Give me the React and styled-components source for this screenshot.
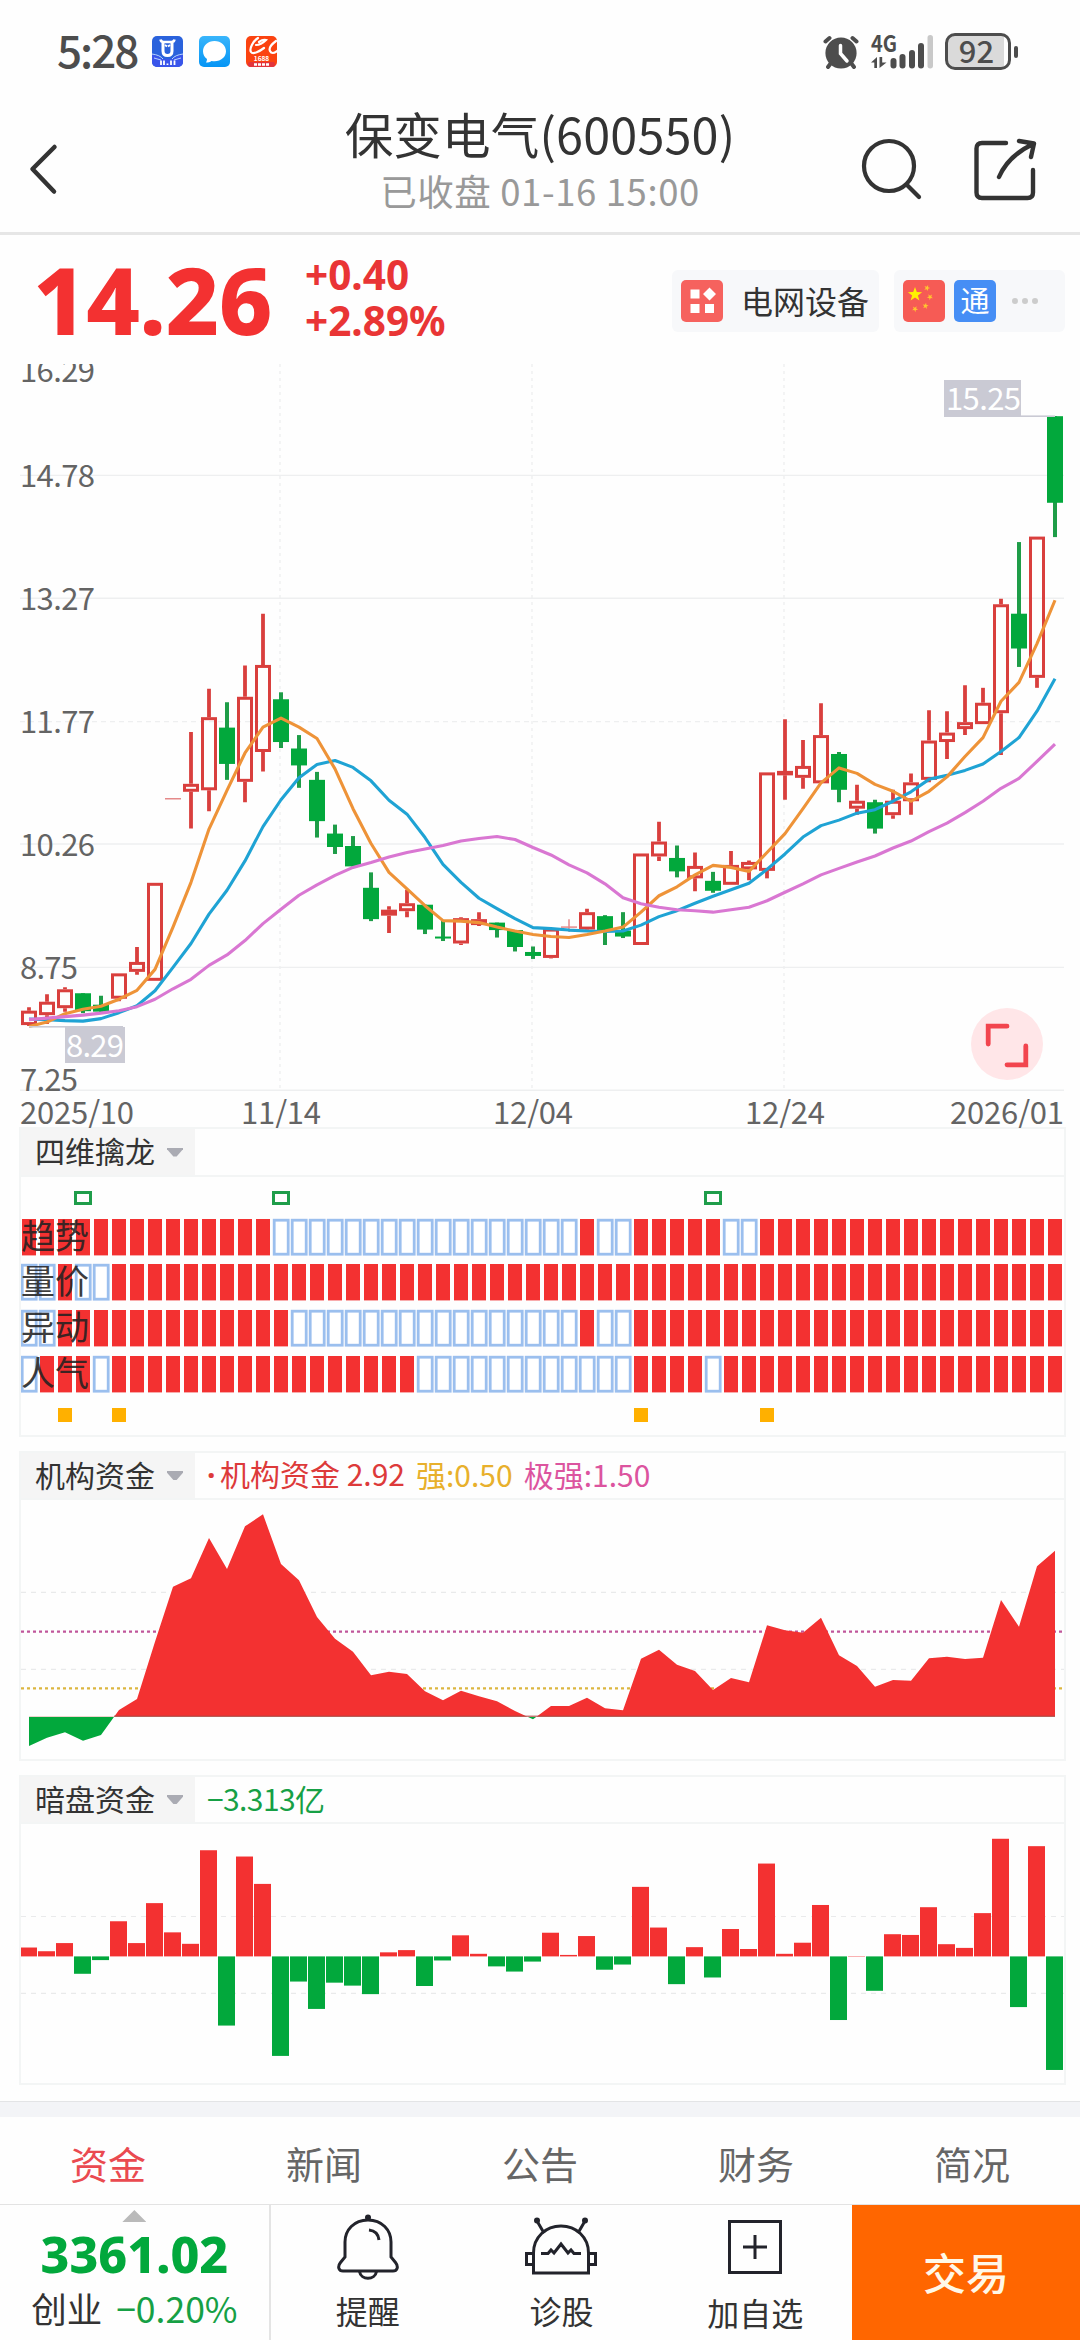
import React from 'react';
import styled, { createGlobalStyle } from 'styled-components';

const RED = '#f33131';
const GREEN = '#02a83c';
const STEP = 18;

const colX = i => 29 + STEP * i;
const priceY = v => v * 0.49745 - 4;
const fundY = v => v / 3 - 60;

// [direction, body top, body bottom, high, low]
const candles = [
  ['up', 1308, 1337, 1301, 1339],
  ['up', 1290, 1317, 1275, 1335],
  ['up', 1265, 1303, 1261, 1310],
  ['down', 1273, 1309, 1273, 1313],
  ['down', 1296, 1310, 1278, 1310],
  ['up', 1233, 1284, 1233, 1289],
  ['up', 1210, 1230, 1180, 1236],
  ['up', 1051, 1248, 1051, 1248],
  ['flat', 882, 882, 882, 882],
  ['up', 852, 868, 748, 942],
  ['up', 718, 865, 661, 907],
  ['down', 739, 812, 688, 844],
  ['up', 677, 848, 614, 889],
  ['up', 613, 788, 510, 827],
  ['down', 682, 768, 668, 780],
  ['down', 781, 815, 754, 860],
  ['down', 844, 927, 828, 960],
  ['down', 952, 979, 934, 993],
  ['down', 977, 1018, 957, 1018],
  ['down', 1061, 1124, 1030, 1128],
  ['up', 1105, 1117, 1098, 1152],
  ['up', 1092, 1108, 1065, 1120],
  ['down', 1095, 1145, 1095, 1154],
  ['down', 1159, 1163, 1127, 1168],
  ['up', 1122, 1173, 1120, 1176],
  ['up', 1124, 1136, 1110, 1138],
  ['down', 1131, 1146, 1131, 1161],
  ['down', 1146, 1180, 1146, 1189],
  ['down', 1190, 1198, 1179, 1204],
  ['up', 1143, 1202, 1143, 1203],
  ['flat', 1140, 1140, 1124, 1150],
  ['up', 1110, 1145, 1103, 1150],
  ['down', 1118, 1149, 1116, 1176],
  ['down', 1147, 1159, 1110, 1162],
  ['up', 992, 1176, 992, 1176],
  ['up', 968, 998, 928, 1007],
  ['down', 1001, 1028, 976, 1040],
  ['up', 1017, 1042, 990, 1068],
  ['down', 1047, 1067, 1029, 1071],
  ['up', 1015, 1055, 987, 1055],
  ['up', 1009, 1024, 1006, 1046],
  ['up', 829, 1027, 829, 1042],
  ['up', 826, 835, 722, 884],
  ['up', 816, 840, 764, 862],
  ['up', 754, 851, 690, 851],
  ['down', 792, 864, 788, 889],
  ['up', 886, 902, 854, 914],
  ['down', 889, 942, 884, 952],
  ['up', 886, 915, 864, 922],
  ['up', 849, 887, 831, 914],
  ['up', 765, 844, 704, 849],
  ['up', 749, 768, 706, 802],
  ['up', 728, 742, 654, 754],
  ['up', 689, 732, 659, 732],
  ['up', 491, 710, 480, 794],
  ['down', 510, 580, 366, 617],
  ['up', 355, 639, 355, 659],
  ['down', 113, 287, 113, 356],
];

const averages = [
  {
    color: '#1fa3d4',
    points: [
      1325, 1326, 1328, 1329, 1324, 1312, 1298, 1268, 1221, 1173, 1114, 1066,
      1007, 938, 884, 840, 813, 805, 819, 846, 885, 913, 960, 1014, 1050, 1082,
      1103, 1123, 1141, 1143, 1146, 1148, 1149, 1148, 1136, 1119, 1107, 1092,
      1078, 1065, 1052, 1024, 993, 959, 936, 925, 911, 904, 887, 868, 843, 835,
      825, 812, 787, 759, 706, 641,
    ],
  },
  {
    color: '#ee9338',
    points: [
      1340, 1331, 1314, 1305, 1299, 1285, 1267, 1225, 1140, 1050, 943, 865, 790,
      738, 720, 738, 761, 822, 902, 972, 1030, 1063, 1097, 1127, 1128, 1131,
      1140, 1148, 1155, 1159, 1161, 1155, 1148, 1140, 1110, 1077, 1059, 1035,
      1016, 1020, 1028, 990, 952, 902, 850, 820, 831, 853, 867, 887, 867, 838,
      797, 759, 686, 648, 570, 483,
    ],
  },
  {
    color: '#d977d2',
    points: [
      1326, 1323, 1320, 1317, 1313, 1308, 1300, 1285, 1264, 1245, 1217, 1196,
      1167, 1133, 1104, 1076, 1055, 1036, 1020, 1010, 999, 990, 983, 976, 967,
      962, 958, 964, 980, 995, 1015, 1031, 1053, 1081, 1093, 1100, 1105, 1107,
      1110, 1105, 1100, 1087, 1070, 1053, 1035, 1022, 1009, 997, 981, 967, 948,
      931, 910, 887, 861, 841, 807, 772,
    ],
  },
];

const priceLabels = [
  ['16.29', 18],
  ['14.78', 123],
  ['13.27', 246],
  ['11.77', 369],
  ['10.26', 492],
  ['8.75', 615],
  ['7.25', 727],
];

const dateLabels = [
  ['2025/10', 20, 'start'],
  ['11/14', 281, 'middle'],
  ['12/04', 533, 'middle'],
  ['12/24', 785, 'middle'],
  ['2026/01', 1064, 'end'],
];

const span = (from, to) =>
  Array.from({ length: to - from + 1 }, (_, i) => from + i);

const signalRows = [
  { label: '趋势', y: 41, off: [...span(14, 30), 32, 33, 39, 40] },
  { label: '量价', y: 86, off: [0, 1, 3, 4] },
  { label: '异动', y: 132, off: [0, 1, ...span(15, 30), 32, 33] },
  { label: '人气', y: 178, off: [0, 4, ...span(22, 33), 38] },
];

const funds = [
  918, 893, 877, 902, 885, 810, 777, 605, 440, 415, 294, 387, 259, 223, 372,
  421, 531, 596, 635, 706, 695, 702, 754, 781, 752, 769, 784, 813, 838, 798,
  798, 773, 805, 811, 656, 629, 674, 693, 750, 714, 727, 556, 571, 578, 533,
  646, 678, 740, 720, 722, 655, 650, 657, 653, 480, 560, 379, 332,
];

const darkPool = [
  24, 14, 36, -47, -10, 95, 36, 144, 65, 34, 287, -187, 270, 196, -269, -68,
  -142, -71, -79, -102, 11, 17, -80, -11, 57, 7, -27, -41, -14, 64, 4, 55, -36,
  -22, 188, 78, -75, 25, -57, 74, 20, 251, 7, 37, 139, -172, 1, -93, 60, 58,
  133, 33, 23, 117, 318, -137, 298, -307,
];

const Candle = ({ data, index }) => {
  const [kind, top, bottom, high, low] = data;
  const x = colX(index);
  const y1 = priceY(top);
  const y2 = priceY(bottom);
  if (kind === 'flat') {
    return (
      <g stroke="#e58a8a" strokeWidth="1.5">
        <path d={`M${x - 8} ${y1}h16`} />
        {high !== low && <path d={`M${x} ${priceY(high)}V${priceY(low)}`} />}
      </g>
    );
  }
  if (kind === 'down') {
    return (
      <g fill={GREEN}>
        <rect x={x - 2} y={priceY(high)} width="4" height={priceY(low) - priceY(high)} fill="#1e9d48" />
        <rect x={x - 8} y={y1} width="16" height={y2 - y1} />
      </g>
    );
  }
  return (
    <g stroke="#d93f3d" fill="none">
      <path
        strokeWidth="3.8"
        d={`M${x} ${priceY(high)}V${y1}M${x} ${y2}V${priceY(low)}`}
      />
      <rect
        x={x - 6.5}
        y={y1 + 1.5}
        width="13"
        height={Math.max(y2 - y1 - 3, 0.6)}
        strokeWidth="3"
      />
    </g>
  );
};

const PriceChart = () => (
  <ChartWrap>
    <ChartSvg width="1080" height="764" viewBox="0 0 1080 764">
      <g stroke="#eeeff0" strokeWidth="1.4">
        {[111.4, 234.3, 480, 603.4, 726.2].map(y => (
          <path key={y} d={`M20 ${y}H1064`} />
        ))}
        <path d="M20 357.6H1064" strokeDasharray="5 4" />
        {[280, 532, 784].map(x => (
          <path key={x} d={`M${x} 0V726`} strokeDasharray="3 4" />
        ))}
      </g>
      <g fill="#646464" fontSize="31">
        {priceLabels.map(([text, y]) => (
          <text key={text} x="20" y={y} textLength={text.length > 4 ? 75 : 58}>
            {text}
          </text>
        ))}
        {dateLabels.map(([text, x, anchor]) => (
          <text
            key={text}
            x={x}
            y="760"
            textAnchor={anchor}
            textLength={text.length > 5 ? 114 : 80}
          >
            {text}
          </text>
        ))}
      </g>
      {candles.map((data, i) => (
        <Candle key={i} data={data} index={i} />
      ))}
      {averages.map(line => (
        <polyline
          key={line.color}
          fill="none"
          stroke={line.color}
          strokeWidth="3.1"
          strokeLinejoin="round"
          points={line.points.map((v, i) => `${colX(i)},${priceY(v)}`).join(' ')}
        />
      ))}
      <g fill="#cacad4">
        <rect x="29" y="662" width="94" height="1.6" />
        <rect x="65" y="663" width="60" height="36" />
        <rect x="944" y="16" width="77" height="36" />
        <rect x="944" y="51.4" width="111" height="1.6" />
      </g>
      <g fill="#fff" fontSize="31">
        <text x="66" y="693" textLength="58">8.29</text>
        <text x="946" y="46" textLength="75">15.25</text>
      </g>
    </ChartSvg>
    <ExpandButton>
      <svg width="72" height="72" viewBox="0 0 72 72" fill="none" stroke="#f2454e" strokeWidth="4.8">
        <path d="M17.2 36V18.2H36M36 56.8H54.8V38" strokeLinecap="round" />
      </svg>
    </ExpandButton>
  </ChartWrap>
);

const SignalChart = () => (
  <ChartSvg width="1043" height="258" viewBox="21 0 1043 258">
    <g fill="none" stroke="#1f9d4a" strokeWidth="3">
      {[3, 14, 38].map(i => (
        <rect key={i} x={colX(i) - 7.5} y="15.5" width="15" height="11" />
      ))}
    </g>
    {signalRows.map(row => (
      <g key={row.label}>
        {candles.map((_, i) =>
          row.off.includes(i) ? (
            <rect
              key={i}
              x={colX(i) - 6.8}
              y={row.y + 2.2}
              width="14"
              height="34"
              fill="#fff"
              stroke="#9bbfee"
              strokeWidth="2.8"
            />
          ) : (
            <rect key={i} x={colX(i) - 7} y={row.y + 1} width="14" height="36.4" fill={RED} />
          )
        )}
        <text x="21" y={row.y + 31} fontSize="34" fill="#222" fillOpacity="0.88">
          {row.label}
        </text>
      </g>
    ))}
    <g fill="#ffb000">
      {[2, 5, 34, 41].map(i => (
        <rect key={i} x={colX(i) - 7} y="231" width="14" height="14" />
      ))}
    </g>
  </ChartSvg>
);

const FundChart = () => {
  const line = funds.map((v, i) => `${colX(i)},${fundY(v)}`).join(' ');
  const zero = fundY(830);
  return (
    <ChartSvg width="1043" height="259" viewBox="21 0 1043 259">
      <defs>
        <clipPath id="above"><rect x="0" y="0" width="1080" height={zero} /></clipPath>
        <clipPath id="below"><rect x="0" y={zero} width="1080" height="90" /></clipPath>
      </defs>
      <g stroke="#e9eaeb" strokeWidth="1.2" strokeDasharray="5 5">
        <path d={`M21 ${fundY(457)}H1064`} />
        <path d={`M21 ${fundY(688)}H1064`} />
      </g>
      <path d={`M21 ${fundY(575)}H1064`} stroke="#c0569b" strokeWidth="2.2" strokeDasharray="3 3" />
      <path d={`M21 ${fundY(745)}H1064`} stroke="#dcb640" strokeWidth="2.2" strokeDasharray="3 3" />
      <polygon
        clipPath="url(#above)"
        fill={RED}
        points={`${colX(0)},${zero} ${line} ${colX(57)},${zero}`}
      />
      <polygon
        clipPath="url(#below)"
        fill={GREEN}
        points={`${colX(0)},${zero} ${line} ${colX(57)},${zero}`}
      />
      <path d={`M114 ${zero - 0.5}H1055`} stroke="#b04545" strokeWidth="1" />
    </ChartSvg>
  );
};

const DarkPoolChart = () => (
  <ChartSvg width="1043" height="259" viewBox="21 0 1043 259">
    <g stroke="#e9eaeb" strokeWidth="1.2" strokeDasharray="5 5">
      <path d="M21 92.5H1064M21 169.4H1064" />
    </g>
    {darkPool.map((v, i) => {
      const height = Math.abs(v) / 2.7034;
      return (
        <rect
          key={i}
          x={20 + STEP * i}
          y={v > 0 ? 132.4 - height : 132.4}
          width="17"
          height={height}
          fill={v > 0 ? RED : GREEN}
        />
      );
    })}
  </ChartSvg>
);

const AlarmIcon = () => (
  <svg width="36" height="36" viewBox="0 0 36 36">
    <g stroke="#4d4d4d" strokeWidth="4" strokeLinecap="round">
      <path d="M2.500 7.500L6.500 4M33.500 7.500L29.500 4M8 29L5 33M28 29L31 33" />
    </g>
    <circle cx="18" cy="19" r="15.600" fill="#4d4d4d" />
    <path d="M17.500 11.500V19.500L24 27" fill="none" stroke="#fff" strokeWidth="3.500" strokeLinecap="round" />
  </svg>
);

const SignalIcon = () => (
  <svg width="64" height="36" viewBox="0 0 64 36" fill="#4d4d4d" overflow="visible">
    <text x="0" y="18" fontSize="23" fontWeight="700" textLength="26" lengthAdjust="spacingAndGlyphs">4G</text>
    <path d="M0 28.500L6 23V34H3.300V28.500ZM8.500 23H11.200V28.500H15.500L8.500 34Z" />
    <rect x="19.500" y="24" width="6" height="10.500" rx="3" />
    <rect x="28.500" y="20" width="6" height="14.500" rx="3" />
    <rect x="38" y="16" width="6" height="18.500" rx="3" />
    <rect x="47" y="9" width="6" height="25.500" rx="3" />
    <rect x="56.500" y="1" width="5.500" height="33.500" rx="2.700" fill="#c9c9c9" />
  </svg>
);

const BullAppIcon = () => (
  <svg width="31" height="31" viewBox="0 0 31 31">
    <rect width="31" height="31" rx="5" fill="#2a62dc" />
    <path d="M0 18Q7 20 10 23H21Q24 20 31 18V26A5 5 0 0 1 26 31H5A5 5 0 0 1 0 26Z" fill="#3a55ea" />
    <path d="M0 18Q8 19 11 23M31 18Q23 19 20 23M2 22L9 24M29 22L22 24" stroke="#b7d2ff" strokeWidth="1" fill="none" />
    <path d="M8.500 3.500Q9 6 11.500 6H19.500Q22 6 22.500 3.500" fill="none" stroke="#fff" strokeWidth="2.600" />
    <path d="M11 7V15Q11 19.500 15.500 19.500T20 15V7" fill="none" stroke="#fff" strokeWidth="3" />
    <path d="M13 9L15 10.500M18 9L16 10.500" stroke="#fff" strokeWidth="1.800" />
    <path d="M9 24.500V29M12 24.500V29M15.500 27.500V29M19 24.500V29M22.500 24.500V29" stroke="#fff" strokeWidth="1.800" />
  </svg>
);

const ChatAppIcon = () => (
  <svg width="31" height="31" viewBox="0 0 31 31">
    <defs>
      <linearGradient id="chat" x2="0" y2="1">
        <stop stopColor="#39b5fb" />
        <stop offset="1" stopColor="#0595f5" />
      </linearGradient>
    </defs>
    <rect width="31" height="31" rx="5" fill="url(#chat)" />
    <path d="M15.500 5C9 5 4 9.500 4 15.300c0 3.300 1.500 6 4 7.800 0 1.300-.3 2.400-1 3.300 2.300 0 4-.5 5.500-1.500 8 1.500 14.500-3 14.500-9.600C27 9.500 22 5 15.500 5z" fill="#fff" />
  </svg>
);

const MarketAppIcon = () => (
  <svg width="31" height="31" viewBox="0 0 31 31">
    <rect width="31" height="31" rx="5" fill="#fb4310" />
    <path d="M12 2C7 5 3 13 5 16S14 15 18 12M10 9Q15 9 20 4Q17 3 13 6M30 5Q22 11 24 15T31 15" fill="none" stroke="#fff" strokeWidth="2.200" strokeLinecap="round" />
    <text x="15.500" y="24.500" fill="#fff" fontSize="6.500" fontWeight="700" textAnchor="middle">1688</text>
    <rect y="26" x="2" width="27" height="5" rx="2" fill="#e2343c" />
    <path d="M8 28.500H23" stroke="#fff" strokeWidth="2.500" strokeDasharray="3 1" />
  </svg>
);

const ShareIcon = () => (
  <svg width="64" height="64" viewBox="0 0 64 64" fill="none" stroke="#333" strokeWidth="4.400" strokeLinecap="round" strokeLinejoin="round">
    <path d="M33 5H9Q3.500 5 3.500 10.500V54.500Q3.500 60 9 60H54.500Q60 60 60 54.500V32" />
    <path d="M26 39Q35 18 60 6M46 3L61 5.500L58 19" />
  </svg>
);

const BellIcon = () => (
  <svg width="62" height="66" viewBox="0 0 62 66" fill="none" stroke="#22232b" strokeWidth="3">
    <circle cx="31" cy="3.500" r="3" fill="#22232b" stroke="none" />
    <path d="M31 6C17 6 8 16 8 28V43L3.500 48.500C0 53 2 57 6 57H56C60 57 62 53 58.500 48.500L54 43V28C54 16 45 6 31 6Z" />
    <path d="M22.500 57.500C24 66.500 38 66.500 39.500 57.500" />
    <path d="M32 16Q41 17 42 26" />
  </svg>
);

const RobotIcon = () => (
  <svg width="74" height="60" viewBox="0 0 74 60" fill="none" stroke="#22232b" strokeWidth="3">
    <circle cx="13" cy="3.500" r="3" fill="#22232b" stroke="none" />
    <circle cx="61" cy="3.500" r="3" fill="#22232b" stroke="none" />
    <path d="M13 4L20 16M61 4L54 16" />
    <path d="M9.500 56V36C9.500 20 22 9 37 9S64.500 20 64.500 36V56Z" />
    <path d="M9.500 36.500H2.500V47.500H9.500M64.500 36.500H71.500V47.500H64.500" />
    <path d="M17 36.500H24L27 33L30 36L37 27L44 36L47 33L50 36.500H57" />
  </svg>
);

const AddIcon = () => (
  <svg width="54" height="54" viewBox="0 0 54 54" fill="none" stroke="#22232b" strokeWidth="3">
    <path d="M1.500 1.500H52.500V52.500H1.500ZM27 15V39M15 27H39" />
  </svg>
);

const Star = ({ x, y, r, turn = 0 }) => (
  <polygon
    transform={`translate(${x} ${y}) rotate(${turn}) scale(${r})`}
    points="0,-1 .24,-.32 .95,-.31 .38,.12 .59,.81 0,.4 -.59,.81 -.38,.12 -.95,-.31 -.24,-.32"
  />
);

const Indicator = ({ name, headHeight, children, chart }) => (
  <Panel>
    <PanelHead $height={headHeight}>
      <PanelTab>
        {name}
        <Caret />
      </PanelTab>
      {children}
    </PanelHead>
    {chart}
  </Panel>
);

const App = () => (
  <Page>
    <GlobalStyle />
    <StatusBar>
      <Clock>5:28</Clock>
      <AppIcons>
        <BullAppIcon />
        <ChatAppIcon />
        <MarketAppIcon />
      </AppIcons>
      <StatusRight>
        <AlarmIcon />
        <SignalIcon />
        <Battery>
          <BatteryBody>92</BatteryBody>
          <BatteryCap />
        </Battery>
      </StatusRight>
    </StatusBar>

    <Header>
      <HeaderSide>
        <svg width="30" height="52" viewBox="0 0 30 52" fill="none" stroke="#333" strokeWidth="4.500" strokeLinecap="round" strokeLinejoin="round">
          <path d="M25.500 4L3.500 26L25 48.500" />
        </svg>
      </HeaderSide>
      <HeaderTitle>
        <StockName>保变电气(600550)</StockName>
        <StockTime>已收盘 01-16 15:00</StockTime>
      </HeaderTitle>
      <HeaderSide $end>
        <svg width="62" height="62" viewBox="0 0 62 62" fill="none" stroke="#333" strokeWidth="4.200" strokeLinecap="round">
          <circle cx="28" cy="28" r="25" />
          <path d="M46 47L58 59" />
        </svg>
        <ShareIcon />
      </HeaderSide>
    </Header>

    <Quote>
      <Price>14.26</Price>
      <Change>
        <span>+0.40</span>
        <span>+2.89%</span>
      </Change>
      <Tags>
        <Tag>
          <Badge $color="#f6625e">
            <svg width="42" height="42" fill="#fff">
              <path d="M9.500 9.500h9v9h-9zM9.500 24h9v9h-9zM24 24h9v9h-9zM28.500 7.500l6.500 6.500l-6.500 6.500l-6.500-6.500z" />
            </svg>
          </Badge>
          <TagName>电网设备</TagName>
        </Tag>
        <Tag $wide>
          <Badge $color="#f65b55">
            <svg width="42" height="42" fill="#fff100">
              <Star x={12} y={14.5} r={7.5} />
              <g fill="#ffc62e">
                <Star x={24} y={8} r={3.2} turn={20} />
                <Star x={27} y={17} r={3.2} turn={40} />
                <Star x={22.5} y={26} r={3.2} turn={10} />
                <Star x={12} y={29} r={3.2} turn={30} />
              </g>
            </svg>
          </Badge>
          <Badge $color="#468ef5">通</Badge>
          <Dots>
            <i />
            <i />
            <i />
          </Dots>
        </Tag>
      </Tags>
    </Quote>

    <PriceChart />

    <Panels>
      <Indicator name="四维擒龙" headHeight={48} chart={<SignalChart />} />
      <Indicator name="机构资金" headHeight={47} chart={<FundChart />}>
        <Legend>
          <LegendItem $color="#dd3a3a">
            <Dot>·</Dot>机构资金 2.92
          </LegendItem>
          <LegendItem $color="#e8b02c">强:0.50</LegendItem>
          <LegendItem $color="#dc549f">极强:1.50</LegendItem>
        </Legend>
      </Indicator>
      <Indicator name="暗盘资金" headHeight={47} chart={<DarkPoolChart />}>
        <Legend>
          <LegendItem $color="#16a045" $tight>−3.313亿</LegendItem>
        </Legend>
      </Indicator>
    </Panels>

    <Divider />

    <Tabs>
      {['资金', '新闻', '公告', '财务', '简况'].map((tab, i) => (
        <TabItem key={tab} $active={i === 0}>
          {tab}
        </TabItem>
      ))}
    </Tabs>

    <BottomBar>
      <IndexBox>
        <UpArrow />
        <IndexValue>3361.02</IndexValue>
        <IndexInfo>
          创业 <em>−0.20%</em>
        </IndexInfo>
      </IndexBox>
      <Action>
        <ActionIcon><BellIcon /></ActionIcon>
        提醒
      </Action>
      <Action>
        <ActionIcon><RobotIcon /></ActionIcon>
        诊股
      </Action>
      <Action $low>
        <ActionIcon><AddIcon /></ActionIcon>
        加自选
      </Action>
      <TradeButton>交易</TradeButton>
    </BottomBar>
  </Page>
);

export default App;

const GlobalStyle = createGlobalStyle`
  * {
    box-sizing: border-box;
  }
  body {
    margin: 0;
    background: #fefefe;
    font-family: 'Noto Sans CJK SC', 'Noto Sans', sans-serif;
  }
  svg {
    display: block;
    flex-shrink: 0;
  }
`;

const Page = styled.div`
  display: flex;
  flex-direction: column;
  width: 1080px;
  height: 2340px;
  overflow: hidden;
  background: #fefefe;
  color: #333;
`;

const StatusBar = styled.div`
  display: flex;
  align-items: center;
  height: 103px;
  padding: 0 62px 0 57px;
`;

const Clock = styled.div`
  width: 95px;
  font-size: 44px;
  font-weight: 500;
  letter-spacing: -2px;
  line-height: 50px;
  margin-top: -5px;
  color: #4d4d4d;
`;

const AppIcons = styled.div`
  display: flex;
  gap: 16px;
`;

const StatusRight = styled.div`
  display: flex;
  align-items: center;
  gap: 12px;
  margin-left: auto;
`;

const Battery = styled.div`
  display: flex;
  align-items: center;
  gap: 3px;
  margin-left: -2px;
`;

const BatteryBody = styled.div`
  width: 66px;
  height: 37px;
  padding-right: 3px;
  border: 3px solid #4d4d4d;
  border-radius: 10px;
  background: linear-gradient(90deg, #dadada 56px, #fefefe 56px);
  font-size: 31px;
  font-weight: 500;
  line-height: 27px;
  text-align: center;
  color: #4d4d4d;
`;

const BatteryCap = styled.div`
  width: 4px;
  height: 12px;
  border-radius: 2px;
  background: #4d4d4d;
`;

const Header = styled.div`
  display: flex;
  justify-content: space-between;
  height: 132px;
  border-bottom: 3px solid #e6e6e6;
`;

const HeaderSide = styled.div`
  display: flex;
  gap: 50px;
  width: 250px;
  padding: ${props => (props.$end ? '35px 0 0 31px' : '40px 0 0 29px')};
`;

const HeaderTitle = styled.div`
  display: flex;
  flex-direction: column;
  align-items: center;
  white-space: nowrap;
`;

const StockName = styled.div`
  font-size: 48.500px;
  letter-spacing: 0.200px;
  line-height: 61px;
`;

const StockTime = styled.div`
  margin-top: 3px;
  font-size: 36.500px;
  letter-spacing: 0.600px;
  line-height: 48px;
  color: #999;
`;

const Quote = styled.div`
  display: flex;
  height: 129px;
  padding: 0 15px 0 33px;
`;

const Price = styled.div`
  width: 272px;
  font-family: 'Noto Sans', sans-serif;
  font-size: 93px;
  font-weight: 800;
  letter-spacing: -0.500px;
  line-height: 128px;
  color: ${RED};
`;

const Change = styled.div`
  display: flex;
  flex-direction: column;
  padding-top: 17px;
  font-family: 'Noto Sans', sans-serif;
  font-size: 40.500px;
  font-weight: 700;
  line-height: 46px;
  color: #e93535;
`;

const Tags = styled.div`
  display: flex;
  gap: 15px;
  margin: 35px 0 0 auto;
`;

const Tag = styled.div`
  display: flex;
  align-items: center;
  gap: 9px;
  width: ${props => (props.$wide ? 171 : 207)}px;
  height: 62px;
  padding-left: 9px;
  border-radius: 6px;
  background: #f7f8fa;
`;

const Badge = styled.div`
  width: 42px;
  height: 42px;
  border-radius: 5px;
  background: ${props => props.$color};
  font-size: 29px;
  line-height: 39px;
  text-align: center;
  color: #fff;
`;

const TagName = styled.div`
  margin: -3px 0 0 9px;
  font-size: 32px;
  line-height: 40px;
`;

const Dots = styled.div`
  display: flex;
  gap: 4px;
  margin-left: 7px;
  i {
    width: 6px;
    height: 6px;
    border-radius: 50%;
    background: #ccc;
  }
`;

const ChartWrap = styled.div`
  position: relative;
  height: 763px;
`;

const ChartSvg = styled.svg`
  overflow: hidden;
`;

const ExpandButton = styled.div`
  position: absolute;
  right: 37px;
  bottom: 47px;
  width: 72px;
  height: 72px;
  border-radius: 50%;
  background: #ffe6e8;
`;

const Panels = styled.div`
  display: flex;
  flex-direction: column;
  gap: 14px;
  height: 974px;
  padding: 0 14px 0 19px;
`;

const Panel = styled.div`
  border: 2px solid #f3f5f5;
`;

const PanelHead = styled.div`
  display: flex;
  height: ${props => props.$height}px;
  border-bottom: 2px solid #f3f5f5;
  font-size: 30px;
`;

const PanelTab = styled.div`
  display: flex;
  align-items: center;
  width: 174px;
  padding: 0 0 4px 14px;
  background: #f5f5f5;
  line-height: 40px;
`;

const Caret = styled.span`
  width: 16px;
  height: 9px;
  margin: 4px 0 0 12px;
  background: #aaabb3;
  clip-path: polygon(0 0, 100% 0, 100% 20%, 60% 100%, 40% 100%, 0 20%);
`;

const Legend = styled.div`
  display: flex;
  align-items: center;
  gap: 11px;
  padding: 0 0 4px 12px;
`;

const LegendItem = styled.span`
  letter-spacing: ${props => (props.$tight ? '-0.6px' : '0')};
  line-height: 40px;
  color: ${props => props.$color};
`;

const Dot = styled.b`
  display: inline-block;
  width: 13px;
  font-family: 'Noto Sans', sans-serif;
`;

const Divider = styled.div`
  height: 16px;
  border-top: 1px solid #e3e4e6;
  background: #f3f4f7;
`;

const Tabs = styled.div`
  display: grid;
  grid-template-columns: repeat(5, 1fr);
  height: 88px;
  border-bottom: 1px solid #e3e3e3;
`;

const TabItem = styled.div`
  font-size: 38px;
  line-height: 92px;
  text-align: center;
  color: ${props => (props.$active ? '#ea4a50' : '#666')};
`;

const BottomBar = styled.div`
  display: flex;
  height: 135px;
`;

const IndexBox = styled.div`
  display: flex;
  flex-direction: column;
  align-items: center;
  width: 271px;
  border-right: 2px solid #e4e4e4;
`;

const UpArrow = styled.div`
  width: 24px;
  height: 12px;
  margin-top: 5px;
  background: #bababa;
  clip-path: polygon(50% 0, 100% 100%, 0 100%);
`;

const IndexValue = styled.div`
  margin-top: 2px;
  font-family: 'Noto Sans', sans-serif;
  font-size: 50px;
  font-weight: 800;
  line-height: 61px;
  color: ${GREEN};
`;

const IndexInfo = styled.div`
  font-size: 35.500px;
  line-height: 46px;
  white-space: nowrap;
  em {
    margin-left: 6px;
    font-style: normal;
    color: #16a045;
  }
`;

const Action = styled.div`
  display: flex;
  flex-direction: column;
  align-items: center;
  gap: ${props => (props.$low ? 2 : 0)}px;
  width: 194px;
  font-size: 32px;
  line-height: 42px;
`;

const ActionIcon = styled.div`
  display: flex;
  align-items: center;
  height: 84px;
`;

const TradeButton = styled.div`
  width: 228px;
  background: #ff6600;
  font-size: 43px;
  font-weight: 500;
  line-height: 132px;
  text-align: center;
  color: #fff8e8;
`;
